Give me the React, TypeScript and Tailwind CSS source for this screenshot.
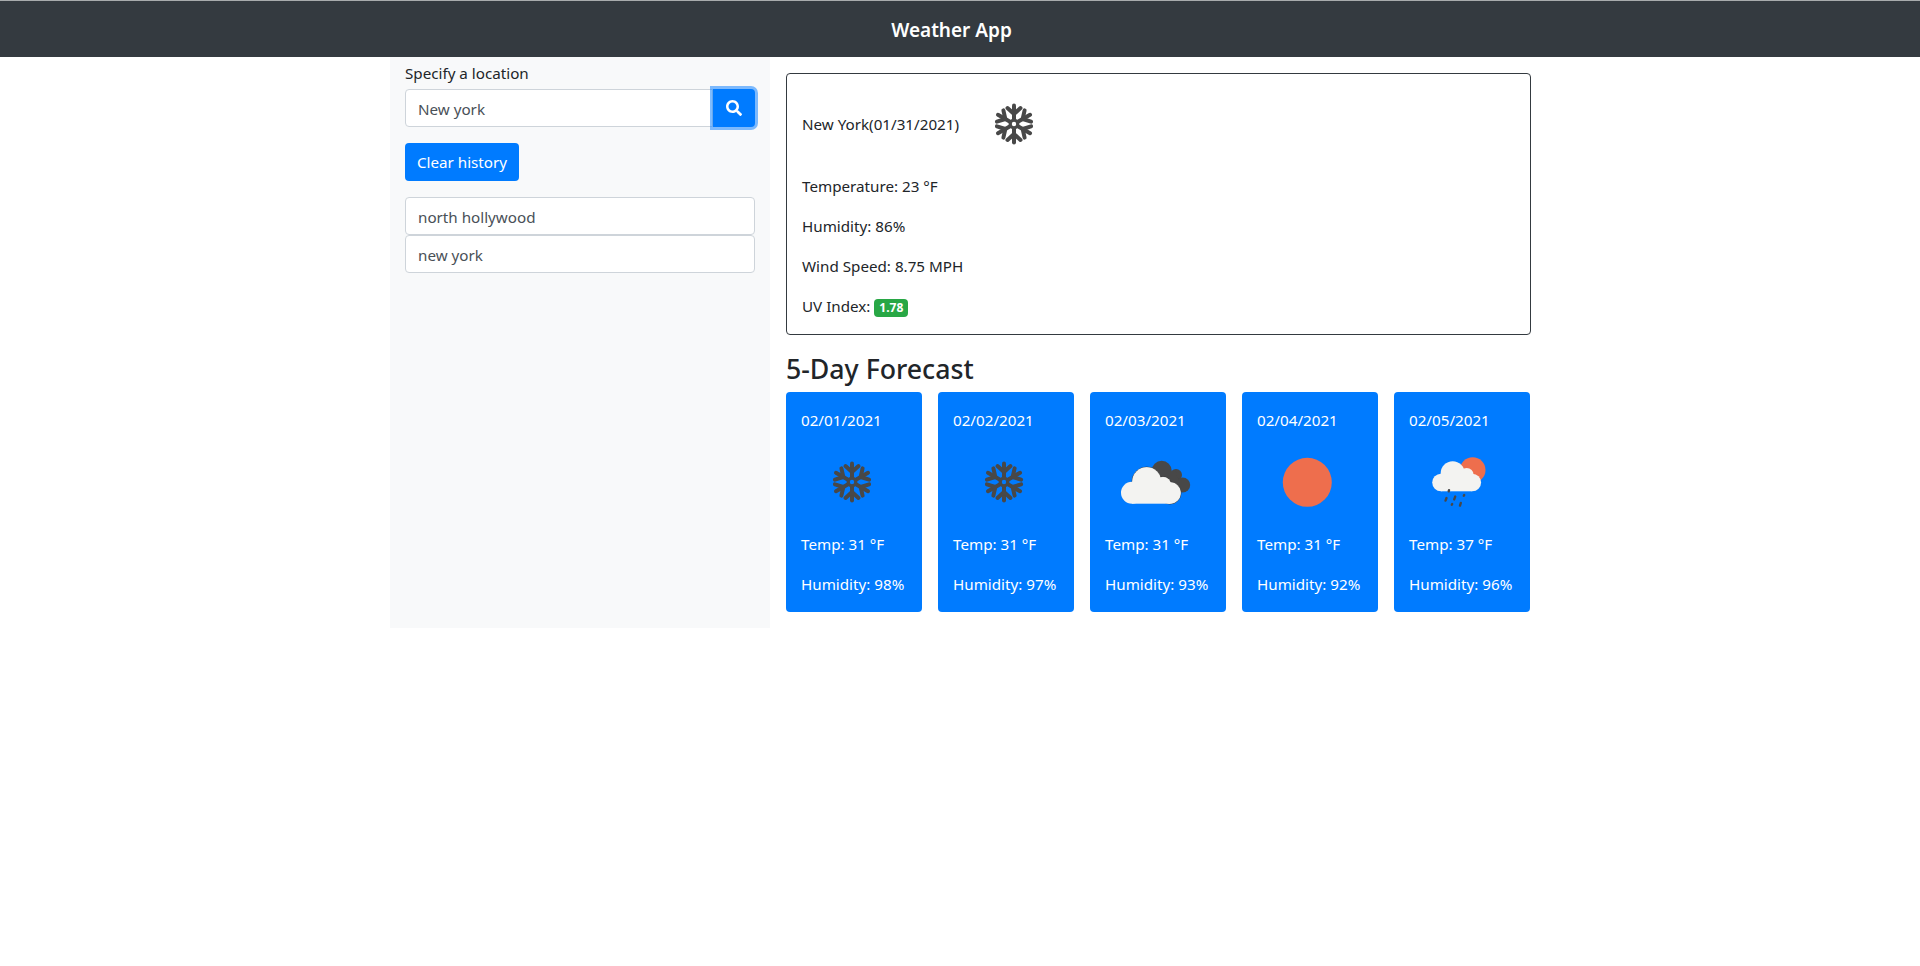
import { FaSearch } from 'react-icons/fa';

type IconKind = 'snow' | 'clouds' | 'clear' | 'rain';

const FORECAST: { date: string; temp: number; humidity: number; icon: IconKind }[] = [
  { date: '02/01/2021', temp: 31, humidity: 98, icon: 'snow' },
  { date: '02/02/2021', temp: 31, humidity: 97, icon: 'snow' },
  { date: '02/03/2021', temp: 31, humidity: 93, icon: 'clouds' },
  { date: '02/04/2021', temp: 31, humidity: 92, icon: 'clear' },
  { date: '02/05/2021', temp: 37, humidity: 96, icon: 'rain' },
];

const ARM_ANGLES = [0, 60, 120, 180, 240, 300];

function WeatherIcon({ kind }: { kind: IconKind }) {
  return (
    <svg viewBox="0 0 100 100" className="w-[100px] h-[100px] shrink-0">
      {kind === 'snow' && (
        <g stroke="#484848" strokeWidth="4" strokeLinecap="round" fill="none">
          {ARM_ANGLES.map((a) => (
            <g key={a} transform={`rotate(${a} 50 50)`}>
              <path d="M50 45 V31.500" />
              <path d="M43.500 34 L50 40 L56.500 34" strokeLinejoin="round" />
            </g>
          ))}
          <circle cx="50" cy="50" r="3.800" strokeWidth="3.200" />
        </g>
      )}
      {kind === 'clouds' && (
        <g>
          <g fill="#484848">
            <circle cx="55.700" cy="38.700" r="10" />
            <circle cx="70" cy="43" r="6" />
            <circle cx="76.700" cy="53" r="7.500" />
            <path d="M46 38 L70 40 L76 60 L60 60 Z" />
          </g>
          <g fill="#f3f3f1" stroke="#2f2f2f" strokeWidth="0.700">
            <circle cx="40.700" cy="49.700" r="14.700" />
            <circle cx="57" cy="53" r="8.300" />
            <circle cx="64" cy="61" r="11" />
          </g>
          <g fill="#f3f3f1">
            <circle cx="26" cy="60.700" r="11" />
            <circle cx="64" cy="61" r="10.700" />
            <rect x="26" y="50" width="38" height="21.700" />
            <circle cx="40.700" cy="49.700" r="14.400" />
            <circle cx="57" cy="53" r="8" />
          </g>
        </g>
      )}
      {kind === 'clear' && <circle cx="49.300" cy="50.300" r="24.500" fill="#ee6e4d" />}
      {kind === 'rain' && (
        <g>
          <circle cx="62.700" cy="38" r="12.800" fill="#ee6e4d" />
          <g fill="#f3f3f1">
            <circle cx="42.700" cy="41.300" r="12" />
            <circle cx="31" cy="50.500" r="8.800" />
            <circle cx="56.700" cy="43" r="7" />
            <circle cx="62.300" cy="50.500" r="8.800" />
            <rect x="31" y="44" width="31" height="15.300" />
          </g>
          <g stroke="#484848" strokeLinecap="round" strokeWidth="2.400">
            <path d="M39 58.200 L38.700 59.400" />
            <path d="M36.500 66 L35.500 68.600" />
            <path d="M45.200 64.600 L44.200 67.400" />
            <path d="M54.200 63 L53.800 63.800" />
            <path d="M42.200 72 L41.800 72.800" />
            <path d="M50.800 71 L50 73.600" />
          </g>
        </g>
      )}
    </svg>
  );
}

export default function App() {
  return (
    <div className="min-h-[966px] bg-white text-[#212529] text-[15.2px] font-['Noto_Sans',sans-serif]">
      <header className="h-[57px] bg-[#343a40] border-t border-[#a8abad] flex items-center justify-center pr-[17px] pt-[2px]">
        <h1 className="text-[19px] font-semibold text-white">Weather App</h1>
      </header>

      <div className="w-[1140px] mx-auto flex">
        <aside className="w-[380px] shrink-0 bg-[#f8f9fa] px-[15px] pt-[4px]">
          <label className="block h-[28px] leading-6">Specify a location</label>
          <div className="flex h-[38px]">
            <input
              readOnly
              value="New york"
              className="flex-1 min-w-0 bg-white border border-[#ced4da] rounded-l px-3 pt-[2px] text-[#495057] outline-none"
            />
            <button className="w-[42px] bg-[#007bff] rounded-r flex items-center justify-center text-white ring-[3px] ring-[#007bff]/50">
              <FaSearch size={16} />
            </button>
          </div>
          <button className="mt-4 h-[38px] w-[114px] bg-[#007bff] text-white rounded">Clear history</button>
          <ul className="mt-4">
            {['north hollywood', 'new york'].map((city) => (
              <li
                key={city}
                className="h-[38px] bg-white border border-[#ced4da] rounded px-3 pt-[2px] flex items-center text-[#495057]"
              >
                {city}
              </li>
            ))}
          </ul>
        </aside>

        <main className="flex-1 min-w-0 pl-4 pt-4 pb-4">
          <section className="border border-[#343a40] rounded pl-[15px] pr-4 pt-4 pb-4 h-[262px] w-[745px]">
            <div className="flex items-center h-[68px]">
              <span>New York(01/31/2021)</span>
              <div className="-my-4 ml-[5px]">
                <WeatherIcon kind="snow" />
              </div>
            </div>
            <p className="mt-4 leading-6">Temperature: 23 °F</p>
            <p className="mt-4 leading-6">Humidity: 86%</p>
            <p className="mt-4 leading-6">Wind Speed: 8.75 MPH</p>
            <p className="mt-4 leading-6">
              UV Index:{' '}
              <span className="inline-block bg-[#28a745] text-white text-[12px] font-bold leading-none px-[5px] py-[3px] rounded">
                1.78
              </span>
            </p>
          </section>

          <h2 className="mt-4 text-[26.7px] font-medium leading-[34px] mb-[7px] pt-px h-[34px]">5-Day Forecast</h2>

          <div className="flex gap-4 w-[744px]">
            {FORECAST.map((day) => (
              <div key={day.date} className="w-[136px] h-[220px] bg-[#007bff] text-white rounded pl-[15px] pr-4 pt-4">
                <p className="leading-6">{day.date}</p>
                <div className="ml-px">
                  <WeatherIcon kind={day.icon} />
                </div>
                <p className="leading-6">Temp: {day.temp} °F</p>
                <p className="mt-4 leading-6">Humidity: {day.humidity}%</p>
              </div>
            ))}
          </div>
        </main>
      </div>
    </div>
  );
}
